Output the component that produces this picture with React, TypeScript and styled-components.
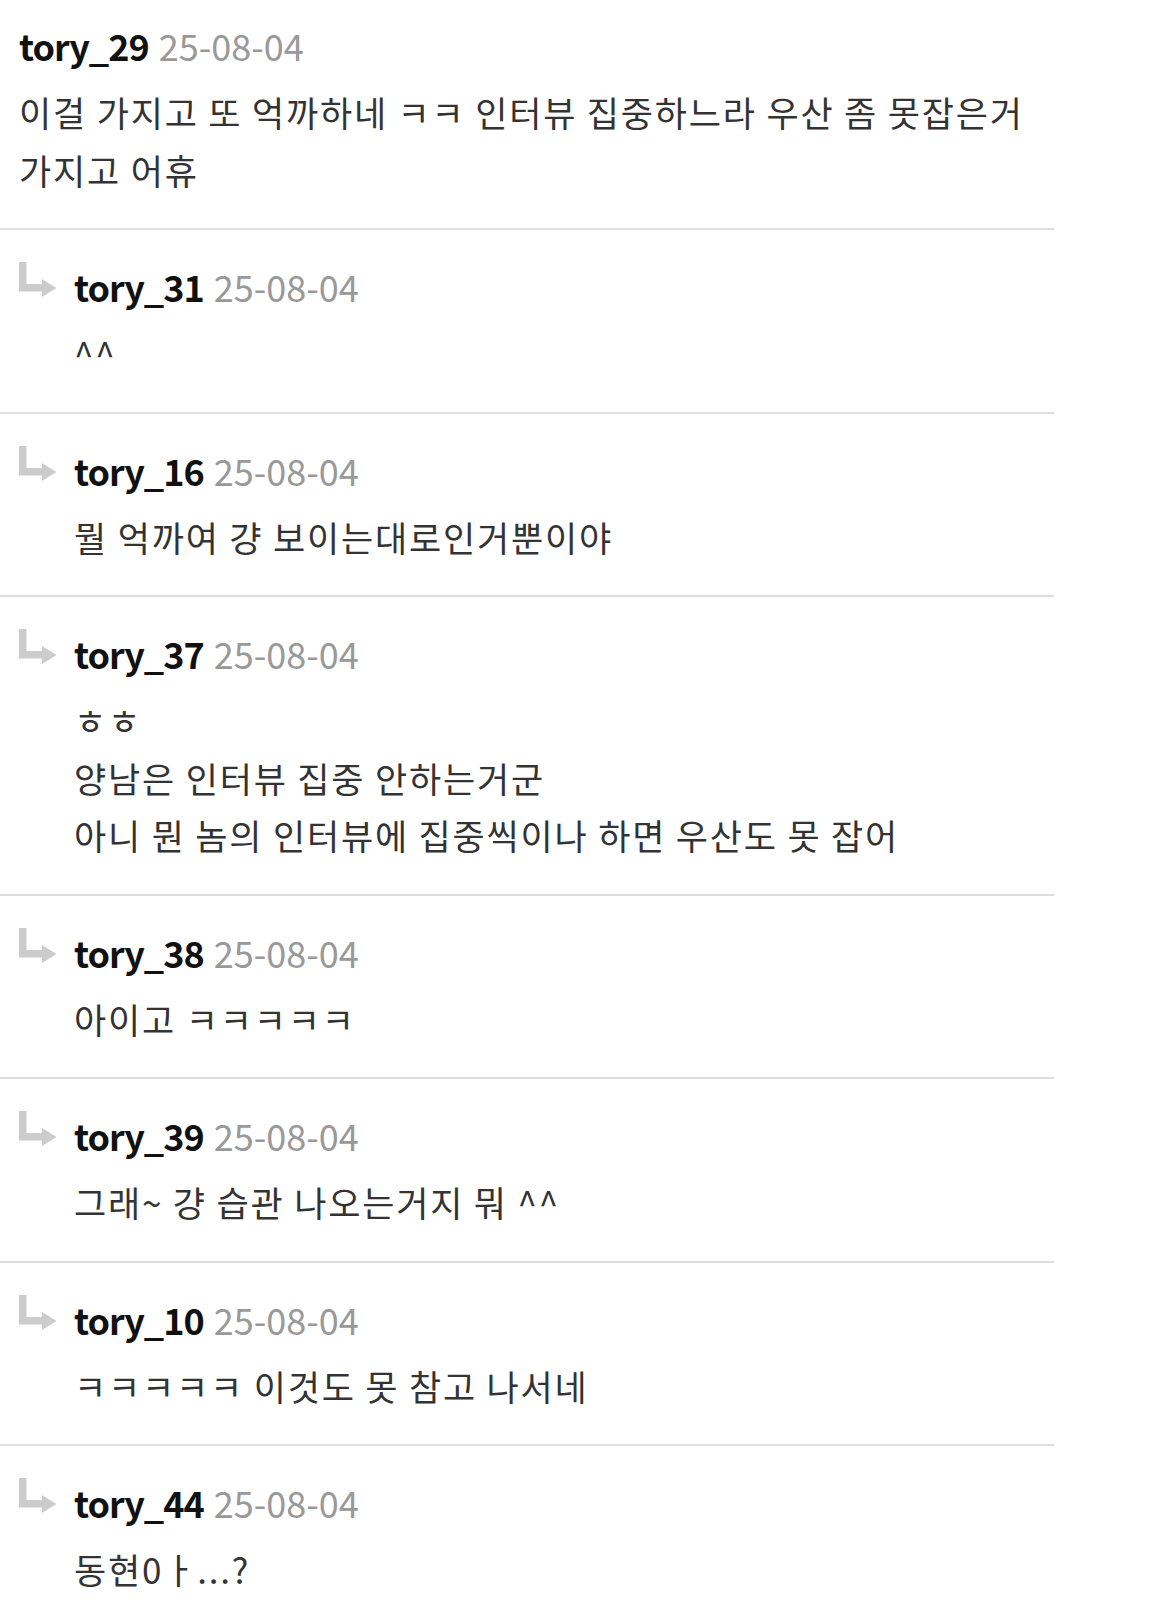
import styled, { createGlobalStyle } from 'styled-components';

type Comment = {
  id: number;
  author: string;
  date: string;
  lines: string[];
  isReply?: boolean;
};

const COMMENTS: Comment[] = [
  {
    id: 1,
    author: 'tory_29',
    date: '25-08-04',
    lines: ['이걸 가지고 또 억까하네 ㅋㅋ 인터뷰 집중하느라 우산 좀 못잡은거 가지고 어휴'],
  },
  { id: 2, author: 'tory_31', date: '25-08-04', lines: ['^^'], isReply: true },
  {
    id: 3,
    author: 'tory_16',
    date: '25-08-04',
    lines: ['뭘 억까여 걍 보이는대로인거뿐이야'],
    isReply: true,
  },
  {
    id: 4,
    author: 'tory_37',
    date: '25-08-04',
    lines: [
      'ㅎㅎ',
      '양남은 인터뷰 집중 안하는거군',
      '아니 뭔 놈의 인터뷰에 집중씩이나 하면 우산도 못 잡어',
    ],
    isReply: true,
  },
  { id: 5, author: 'tory_38', date: '25-08-04', lines: ['아이고 ㅋㅋㅋㅋㅋ'], isReply: true },
  {
    id: 6,
    author: 'tory_39',
    date: '25-08-04',
    lines: ['그래~ 걍 습관 나오는거지 뭐 ^^'],
    isReply: true,
  },
  {
    id: 7,
    author: 'tory_10',
    date: '25-08-04',
    lines: ['ㅋㅋㅋㅋㅋ 이것도 못 참고 나서네'],
    isReply: true,
  },
  { id: 8, author: 'tory_44', date: '25-08-04', lines: ['동현0ㅏ...?'], isReply: true },
];

/**
 * Reply arrow
 */
const ReplyArrow = () => (
  <svg width="38" height="35" viewBox="0 0 38 35" aria-hidden="true">
    <path d="M0 0H7.5V22H23V17L37.5 26L23 35V29.5H0Z" fill="#cccccc" />
  </svg>
);

/**
 * Comment list
 */
const App = () => {
  return (
    <>
      <GlobalStyle />
      <CommentList>
        {COMMENTS.map((comment, index) => (
          <CommentRow key={comment.id} $first={index === 0}>
            {comment.isReply && (
              <ArrowCell>
                <ReplyArrow />
              </ArrowCell>
            )}
            <CommentBody>
              <CommentHeader>
                <Author>{comment.author}</Author>
                <DateText>{comment.date}</DateText>
              </CommentHeader>
              <CommentText>
                {comment.lines.map((line, i) => (
                  <TextLine key={i}>{line}</TextLine>
                ))}
              </CommentText>
            </CommentBody>
          </CommentRow>
        ))}
      </CommentList>
    </>
  );
};

const GlobalStyle = createGlobalStyle`
  html, body {
    margin: 0;
    padding: 0;
    background: #ffffff;
  }
  body {
    font-family: "Noto Sans CJK KR", "Noto Sans", sans-serif;
  }
  * {
    box-sizing: border-box;
  }
`;

const CommentList = styled.div`
  width: 1054px;
`;

const CommentRow = styled.div<{ $first: boolean }>`
  display: flex;
  align-items: flex-start;
  gap: 17px;
  padding: ${({ $first }) => ($first ? '21px' : '32px')} 20px 30px 19px;
  border-bottom: 2px solid #dddddd;
`;

const ArrowCell = styled.div`
  display: flex;
  flex-shrink: 0;
  width: 38px;
  height: 35px;
`;

const CommentBody = styled.div`
  flex: 1;
  min-width: 0;
`;

const CommentHeader = styled.div`
  display: flex;
  align-items: baseline;
  height: 48px;
  line-height: 48px;
`;

const Author = styled.span`
  font-size: 36px;
  font-weight: 700;
  color: #111111;
  letter-spacing: -1px;
`;

const DateText = styled.span`
  margin-left: 10px;
  font-size: 36px;
  font-weight: 400;
  color: #999999;
`;

const CommentText = styled.div`
  margin-top: 14px;
  font-size: 35px;
  line-height: 57.5px;
  letter-spacing: 1.8px;
  color: #333333;
`;

const TextLine = styled.div`
  word-break: keep-all;
`;

export default App;
